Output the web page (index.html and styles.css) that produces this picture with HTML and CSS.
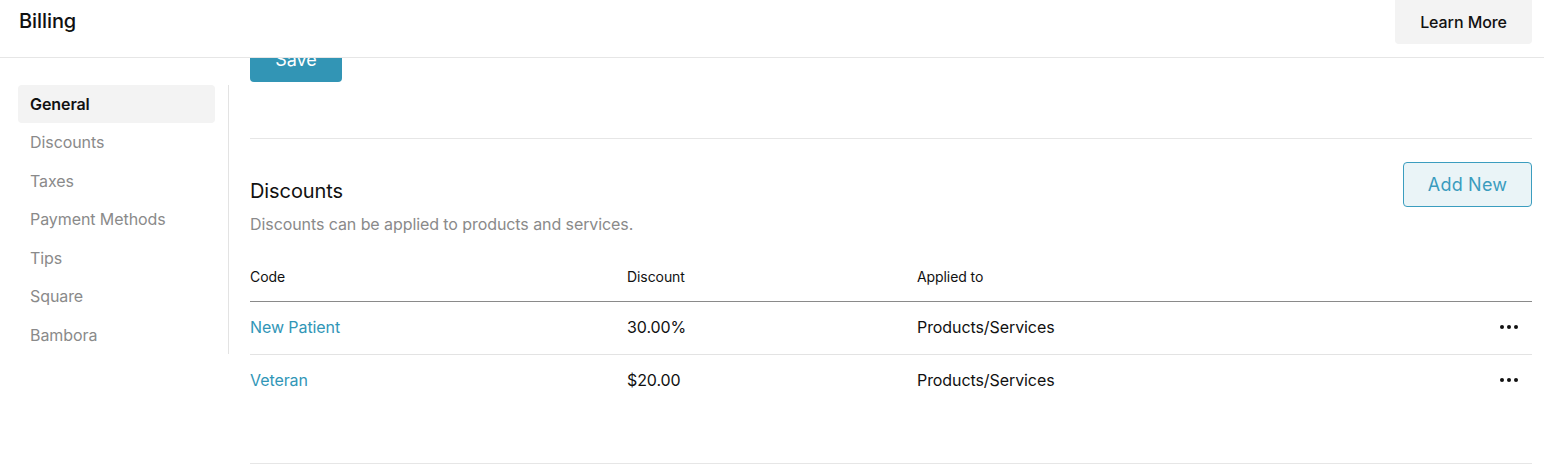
FILE: index.html
```html
<!DOCTYPE html>
<html>
<head>
<meta charset="utf-8">
<link rel="stylesheet" href="styles.css">
</head>
<body>
<header class="topbar">
  <h1 class="title">Billing</h1>
  <button class="btn-learn">Learn More</button>
</header>
<div class="layout">
  <aside class="sidebar">
    <nav class="nav">
      <a class="nav-item active">General</a>
      <a class="nav-item">Discounts</a>
      <a class="nav-item">Taxes</a>
      <a class="nav-item">Payment Methods</a>
      <a class="nav-item">Tips</a>
      <a class="nav-item">Square</a>
      <a class="nav-item">Bambora</a>
    </nav>
  </aside>
  <main class="main">
    <div class="scroller">
      <section class="section section-save">
        <button class="btn-save">Save</button>
      </section>
      <section class="section section-discounts">
        <div class="section-head">
          <div class="head-text">
            <h2 class="section-title">Discounts</h2>
            <p class="section-sub">Discounts can be applied to products and services.</p>
          </div>
          <button class="btn-add">Add New</button>
        </div>
        <div class="table">
          <div class="row row-head">
            <div class="cell">Code</div>
            <div class="cell">Discount</div>
            <div class="cell">Applied to</div>
            <div class="cell"></div>
          </div>
          <div class="row">
            <div class="cell link">New Patient</div>
            <div class="cell">30.00%</div>
            <div class="cell">Products/Services</div>
            <div class="cell actions"><svg width="18" height="4" viewBox="0 0 18 4"><circle cx="2" cy="2" r="2"/><circle cx="9" cy="2" r="2"/><circle cx="16" cy="2" r="2"/></svg></div>
          </div>
          <div class="row">
            <div class="cell link">Veteran</div>
            <div class="cell">$20.00</div>
            <div class="cell">Products/Services</div>
            <div class="cell actions"><svg width="18" height="4" viewBox="0 0 18 4"><circle cx="2" cy="2" r="2"/><circle cx="9" cy="2" r="2"/><circle cx="16" cy="2" r="2"/></svg></div>
          </div>
        </div>
      </section>
    </div>
  </main>
</div>
</body>
</html>
```
FILE: styles.css
```css
* { box-sizing: border-box; }
html, body { margin: 0; padding: 0; background: #fff; }
body {
  font-family: Inter, "Noto Sans", "Liberation Sans", sans-serif;
  color: #111;
  height: 475px;
  overflow: hidden;
  letter-spacing: -0.08px;
}
button { font-family: inherit; cursor: pointer; letter-spacing: inherit; }

.topbar {
  height: 58px;
  border-bottom: 1px solid #e6e6e6;
  display: flex;
  justify-content: space-between;
  align-items: flex-start;
  padding: 0 12px 0 19px;
}
.title {
  margin: 0;
  font-size: 20px;
  font-weight: 500;
  line-height: 43px;
  color: #111;
}
.btn-learn {
  height: 44px;
  width: 137px;
  border: none;
  border-radius: 0 0 4px 4px;
  background: #f3f3f3;
  font-size: 16px;
  font-weight: 500;
  color: #111;
}

.layout {
  display: flex;
  height: 417px;
}
.sidebar {
  padding: 27px 0 0 18px;
  width: 229px;
  flex: none;
}
.nav {
  display: flex;
  flex-direction: column;
  border-right: 1px solid #e3e3e3;
  padding-right: 13px;
}
.nav-item {
  display: block;
  padding: 8px 12px;
  line-height: 22.45px;
  font-size: 16px;
  color: #8a8a8a;
  border-radius: 4px;
}
.nav-item.active {
  background: #f3f3f3;
  color: #111;
  font-weight: 600;
}

.main {
  flex: 1;
  padding: 0 12px 0 21px;
  overflow: hidden;
}
.scroller {
  margin-top: -21px;
}
.section-save {
  padding-bottom: 56px;
  border-bottom: 1px solid #e6e6e6;
}
.btn-save {
  height: 45px;
  width: 92px;
  border: none;
  border-radius: 4px;
  background: #3295b5;
  color: #fff;
  font-size: 18px;
}
.section-discounts {
  padding: 23px 0 56px;
  border-bottom: 1px solid #e6e6e6;
}
.section-head {
  display: flex;
  justify-content: space-between;
  align-items: flex-start;
}
.head-text { padding-top: 17px; }
.section-title {
  margin: 0;
  font-size: 20px;
  font-weight: 400;
  line-height: 24px;
  color: #111;
}
.section-sub {
  margin: 9px 0 0;
  font-size: 16px;
  line-height: 24px;
  color: #8a8a8a;
}
.btn-add {
  width: 129px;
  height: 45px;
  border: 1px solid #3b9dbf;
  border-radius: 4px;
  background: #eaf4f7;
  color: #3a9cbe;
  font-size: 18px;
  letter-spacing: 0.2px;
}

.table { margin-top: 21px; }
.row {
  display: grid;
  grid-template-columns: 377px 290px 1fr 40px;
  align-items: center;
  border-bottom: 1px solid #e3e3e3;
}
.row:last-child { border-bottom: none; }
.row .cell {
  padding: 13px 0 15px;
  line-height: 24px;
  font-size: 16px;
  color: #111;
}
.row-head { border-bottom: 1px solid #8a8a8a; }
.row-head .cell {
  padding: 10px 0 14px;
  line-height: 20px;
  font-size: 14px;
}
.link { color: #3196b7 !important; }
.actions {
  display: flex;
  justify-content: flex-end;
  padding-right: 14px !important;
}
.actions svg { fill: #111; display: block; }
```
